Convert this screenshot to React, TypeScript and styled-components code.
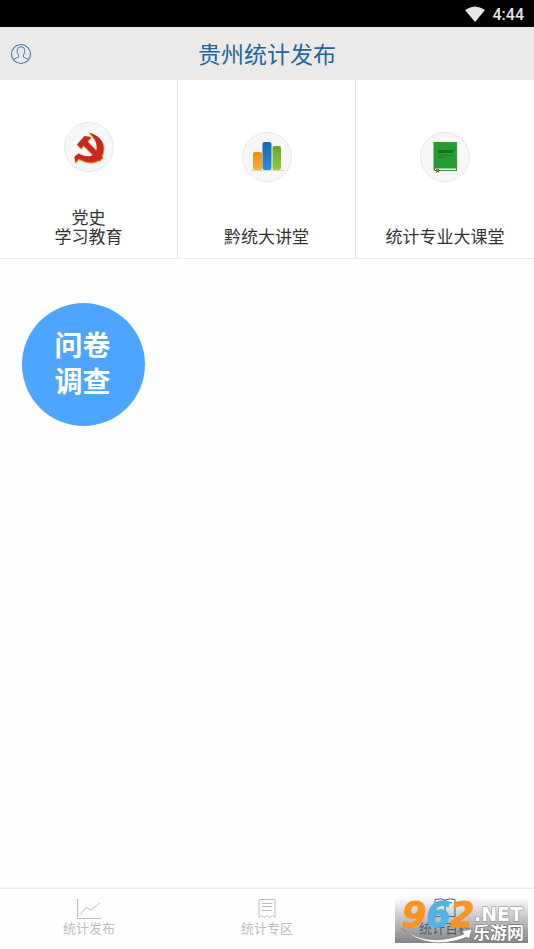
import React from "react";
import styled, { createGlobalStyle } from "styled-components";

const GlobalStyle = createGlobalStyle`
  * { box-sizing: border-box; }
  body {
    margin: 0;
    background: #fefefe;
    font-family: "Noto Sans CJK SC", "Noto Sans", sans-serif;
  }
`;

const Screen = styled.div`
  display: flex;
  flex-direction: column;
  min-height: 100vh;
`;

const StatusBar = styled.div`
  display: flex;
  align-items: center;
  justify-content: flex-end;
  gap: 8px;
  height: 27px;
  padding-right: 10px;
  background: #000;
  color: #e6e6e6;
  font: 500 16px/27px Roboto, sans-serif;
`;

const Clock = styled.span`
  padding-top: 1px;
`;

const Header = styled.header`
  display: grid;
  grid-template-columns: 44px 1fr 44px;
  align-items: center;
  height: 53px;
  background: #ebeae8;
`;

const ProfileButton = styled.button`
  display: flex;
  align-items: center;
  height: 44px;
  padding: 0 0 0 10px;
  border: 0;
  background: none;
`;

const Title = styled.h1`
  margin: 0;
  padding-bottom: 2px;
  color: #22689b;
  text-align: center;
  font-size: 23px;
  line-height: 50px;
  font-weight: 400;
`;

const Tiles = styled.section`
  display: grid;
  grid-template-columns: repeat(3, 1fr);
  height: 179px;
  border-bottom: 1px solid #ececec;
`;

const Tile = styled.button`
  display: flex;
  flex-direction: column;
  align-items: center;
  justify-content: space-between;
  padding: 42px 0 13px;
  border: 0;
  border-right: 1px solid #e4e4e4;
  background: #fff;
  color: #333;
  font-family: inherit;
  font-size: 17px;
  line-height: 19px;

  &:last-child { border-right: 0; }
`;

const IconSlot = styled.span<{ $tall?: boolean }>`
  display: flex;
  padding-top: ${(p) => (p.$tall ? 0 : 10)}px;
`;

const TileLabel = styled.span`
  white-space: pre-line;
`;

const Main = styled.main`
  flex: 1;
  padding: 44px 22px;
`;

const SurveyButton = styled.button`
  width: 123px;
  height: 123px;
  padding: 0 2px 6px 0;
  border: 0;
  border-radius: 50%;
  background: #4da5ff;
  color: #fff;
  font-family: inherit;
  font-size: 28px;
  line-height: 36px;
  font-weight: 700;
  white-space: pre-line;
`;

const TabBar = styled.nav`
  position: relative;
  display: grid;
  grid-template-columns: repeat(3, 1fr);
  height: 61px;
  border-top: 1px solid #e9e9e9;
  box-shadow: 0 -1px 1px #f7f7f7;
  background: #fefefe;
`;

const Tab = styled.a<{ $active?: boolean }>`
  display: flex;
  flex-direction: column;
  align-items: center;
  padding-top: 8px;
  color: ${(p) => (p.$active ? "#22689b" : "#bdbdbd")};
  font-size: 13px;
  line-height: 18px;
  text-decoration: none;

  svg { height: 22px; }
`;

const Watermark = styled.div`
  position: absolute;
  right: 6px;
  bottom: 6px;
  display: flex;
  background: linear-gradient(rgba(200, 200, 200, 0), rgba(90, 90, 90, 0.75));

  svg { overflow: visible; }
`;

const WifiIcon = () => (
  <svg width="20" height="16" viewBox="0 0 20 16" aria-hidden="true">
    <path d="M0 4Q10-3 20 4L10 16Z" fill="#e8e8e8" />
  </svg>
);

const ProfileIcon = () => (
  <svg width="22" height="22" viewBox="0 0 22 22" fill="none" stroke="#3f7ea9" aria-hidden="true">
    <circle cx="11" cy="11" r="9.5" strokeWidth="1.1" />
    <path d="M3 17Q4 16 8.5 14.2V12Q7 10.5 7.2 7Q7.5 3.8 11 3.8T14.8 7Q15 10.5 13.5 12V14.2Q18 16 19 17" strokeWidth=".9" />
  </svg>
);

const Disc = ({ children }: { children: React.ReactNode }) => (
  <svg width="50" height="50" viewBox="0 0 50 50" aria-hidden="true">
    <circle cx="25" cy="25" r="24.5" fill="#f7f7f7" stroke="#e7e8e8" />
    {children}
  </svg>
);

const emblem = (
  <>
    <path d="M25 10.5C35 13 40.5 20 39.5 28C39 35 34 40.5 27 40.5C22 40.5 18 38 14.5 37L11.5 40.5L10.5 34.5L14.5 31.5C19 34 25 35.5 29 33C35.5 28 33.5 18 25 10.5Z" />
    <path d="M13 22.5L20.5 14L27 15L23.5 19.5L39 35.5L35 39L19.5 23.5L17 26.5Z" />
  </>
);

const PartyIcon = () => (
  <Disc>
    <g fill="#edaa37" stroke="#edaa37" strokeWidth="1" transform="translate(.3 .8)">{emblem}</g>
    <g fill="#cb2722">{emblem}</g>
  </Disc>
);

const BarsIcon = () => (
  <Disc>
    <defs>
      <linearGradient id="amber" x2="0" y2="1"><stop stopColor="#e98c18" /><stop offset="1" stopColor="#f8b42c" /></linearGradient>
      <linearGradient id="azure" x2="0" y2="1"><stop stopColor="#1768ad" /><stop offset="1" stopColor="#2d8bd5" /></linearGradient>
      <linearGradient id="leaf" x2="0" y2="1"><stop stopColor="#69a52a" /><stop offset="1" stopColor="#99c943" /></linearGradient>
    </defs>
    <path d="M9 38.5H42" stroke="#d8d4ce" />
    <rect x="11" y="20" width="9" height="18" rx="2" fill="url(#amber)" />
    <rect x="20.5" y="10" width="9" height="28" rx="2" fill="url(#azure)" />
    <rect x="30.5" y="14" width="8.5" height="24" rx="2" fill="url(#leaf)" />
  </Disc>
);

const BookIcon = () => (
  <Disc>
    <path d="M13.5 10H37V39H15.5Q13.5 39 13.5 37Z" fill="#299a32" />
    <path d="M15 36.5H36V38H15Z" fill="#f4fff4" />
    <path d="M18 18H33V21H18Z" fill="#12732d" />
    <path d="M18 23.5H33M18 25.5H26" stroke="#1c8130" />
    <path d="M16 37H19V41L17.5 40L16 41Z" fill="#c55242" />
  </Disc>
);

const ChartIcon = () => (
  <svg width="24" viewBox="0 0 24 22" fill="none" stroke="currentColor" aria-hidden="true">
    <path d="M.5 2V21.5H24" strokeWidth="1.2" />
    <path d="M3.5 17.5L9 10.5L14 13L23 6" />
  </svg>
);

const ReceiptIcon = () => (
  <svg width="18" viewBox="0 0 18 22" fill="none" stroke="currentColor" aria-hidden="true">
    <path d="M1 20.5V2.5H17V20.5L14.5 18.5L12 20.5L9 18.5L6 20.5L3.5 18.5ZM4 6.5H14M4 9.5H14M4 13.5H14" />
  </svg>
);

const WikiIcon = () => (
  <svg width="22" viewBox="0 0 22 22" fill="none" stroke="currentColor" aria-hidden="true">
    <path d="M1 2.5Q7 1 11 3Q15 1 21 2.5V20Q15 18 11 21Q7 18 1 20ZM11 3V20M4 6Q8 4 11 7Q14 4 18 6" />
  </svg>
);

const WatermarkLogo = () => (
  <svg width="133" height="46" viewBox="0 0 133 46" role="img" aria-label="962.NET 乐游网">
    <path d="M6 31Q33 51 69 37L67 34L77 32L74 42L72 40Q34 55 6 31Z" fill="#fff" stroke="#777" strokeWidth=".6" />
    <g fontFamily="DejaVu Sans" fontWeight="700" strokeLinejoin="round">
      <g fontSize="35" fontStyle="italic" strokeWidth="1">
        <text x="7" y="30" fill="#f79428" stroke="#f79428">9</text>
        <text x="31" y="30" fill="#54b3e5" stroke="#54b3e5">6</text>
        <text x="55" y="30" fill="#f79428" stroke="#f79428">2</text>
      </g>
      <text x="79" y="24" fontSize="19" fill="#fff" stroke="#888" strokeWidth="1" paintOrder="stroke">.NET</text>
    </g>
    <text x="78" y="42" fontFamily="Noto Sans CJK SC" fontWeight="700" fontSize="17" fill="#fff" stroke="#666" strokeWidth="1" paintOrder="stroke">乐游网</text>
  </svg>
);

const tiles = [
  { label: "党史\n学习教育", icon: <PartyIcon />, tall: true },
  { label: "黔统大讲堂", icon: <BarsIcon /> },
  { label: "统计专业大课堂", icon: <BookIcon /> },
];

const tabs = [
  { label: "统计发布", icon: <ChartIcon /> },
  { label: "统计专区", icon: <ReceiptIcon /> },
  { label: "统计百科", icon: <WikiIcon />, active: true },
];

export default function App() {
  return (
    <Screen>
      <GlobalStyle />
      <StatusBar><WifiIcon /><Clock>4:44</Clock></StatusBar>
      <Header>
        <ProfileButton aria-label="个人中心"><ProfileIcon /></ProfileButton>
        <Title>贵州统计发布</Title>
      </Header>
      <Tiles>
        {tiles.map((t) => (
          <Tile key={t.label}>
            <IconSlot $tall={t.tall}>{t.icon}</IconSlot>
            <TileLabel>{t.label}</TileLabel>
          </Tile>
        ))}
      </Tiles>
      <Main>
        <SurveyButton>{"问卷\n调查"}</SurveyButton>
      </Main>
      <TabBar>
        {tabs.map((t) => (
          <Tab key={t.label} href="#" $active={t.active}>{t.icon}{t.label}</Tab>
        ))}
        <Watermark><WatermarkLogo /></Watermark>
      </TabBar>
    </Screen>
  );
}
